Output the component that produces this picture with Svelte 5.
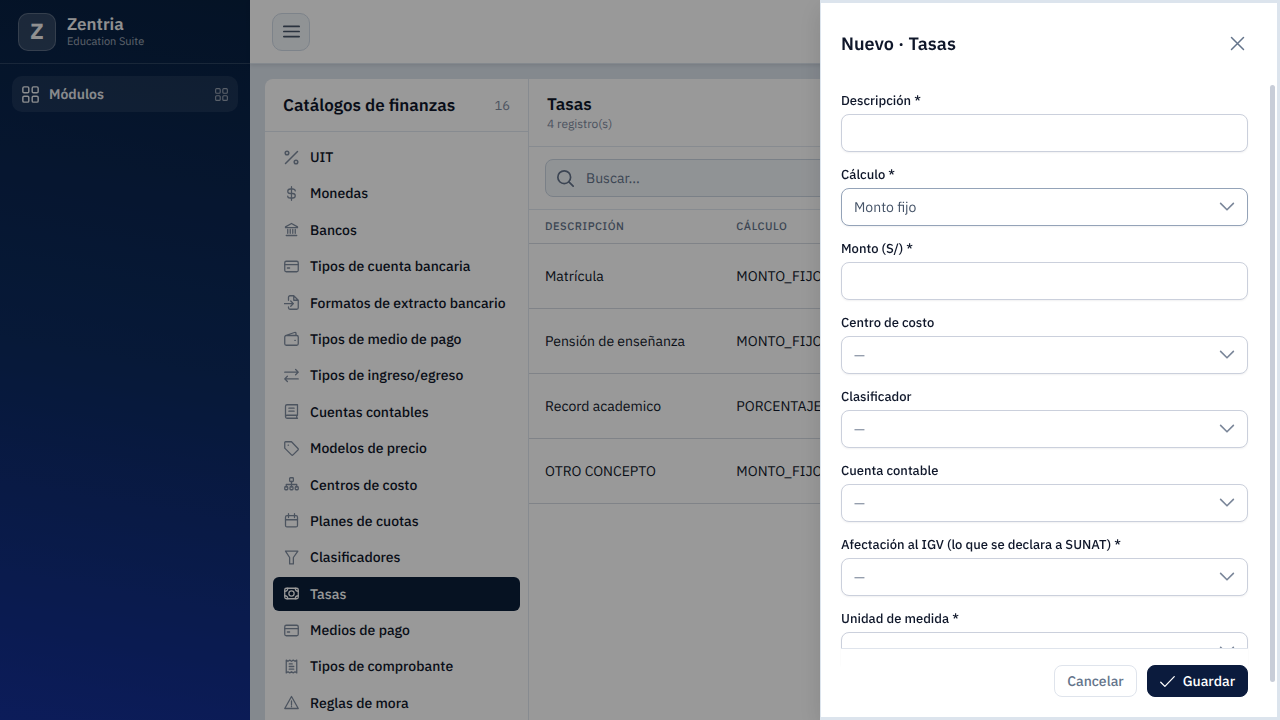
<script>
    const catalogs = [
        { name: 'UIT', icon: 'percent' },
        { name: 'Monedas', icon: 'dollar' },
        { name: 'Bancos', icon: 'bank' },
        { name: 'Tipos de cuenta bancaria', icon: 'card' },
        { name: 'Formatos de extracto bancario', icon: 'import' },
        { name: 'Tipos de medio de pago', icon: 'wallet' },
        { name: 'Tipos de ingreso/egreso', icon: 'swap' },
        { name: 'Cuentas contables', icon: 'book' },
        { name: 'Modelos de precio', icon: 'tag' },
        { name: 'Centros de costo', icon: 'sitemap' },
        { name: 'Planes de cuotas', icon: 'calendar' },
        { name: 'Clasificadores', icon: 'filter' },
        { name: 'Tasas', icon: 'money' },
        { name: 'Medios de pago', icon: 'card' },
        { name: 'Tipos de comprobante', icon: 'receipt' },
        { name: 'Reglas de mora', icon: 'warning' }
    ];

    const rows = [
        { description: 'Matrícula', calc: 'MONTO_FIJO' },
        { description: 'Pensión de enseñanza', calc: 'MONTO_FIJO' },
        { description: 'Record academico', calc: 'PORCENTAJE_' },
        { description: 'OTRO CONCEPTO', calc: 'MONTO_FIJO' }
    ];

    const fields = [
        { id: 'descripcion', label: 'Descripción *', type: 'text' },
        { id: 'calculo', label: 'Cálculo *', type: 'select', value: 'Monto fijo' },
        { id: 'monto', label: 'Monto (S/) *', type: 'text' },
        { id: 'centro', label: 'Centro de costo', type: 'select' },
        { id: 'clasificador', label: 'Clasificador', type: 'select' },
        { id: 'cuenta', label: 'Cuenta contable', type: 'select' },
        { id: 'igv', label: 'Afectación al IGV (lo que se declara a SUNAT) *', type: 'select' },
        { id: 'unidad', label: 'Unidad de medida *', type: 'select' }
    ];

    let selected = $state('Tasas');

    let scroller;
    let thumbTop = $state(0);
    let thumbSize = $state(100);

    const updateThumb = () => {
        thumbTop = scroller.scrollTop;
        thumbSize = (scroller.clientHeight / scroller.scrollHeight) * 100;
    };

    $effect(() => {
        updateThumb();
    });
</script>

<svelte:window onresize={updateThumb} />

{#snippet icon(name, size = 15)}
    <svg class="icon {name}" width={size} height={size} viewBox="0 0 20 20" aria-hidden="true">
        {#if name === 'percent'}
            <path d="M18 2 2 18" /><circle cx="4" cy="4" r="2.4" /><circle cx="16" cy="16" r="2.4" />
        {:else if name === 'dollar'}
            <path d="M10 1v18M15 6.5C15 4.8 13.4 4 11.5 4h-3C6.600 4 5 5 5 7s1.600 3 3.500 3h3c2 0 3.500 1 3.500 3s-1.500 3-3.500 3h-3C6.500 16 5 15 5 13.500" />
        {:else if name === 'bank'}
            <path d="M2 7.500V6.500L10 2l8 4.500v1M3.500 7.500h13M5 10v5M8.300 10v5M11.700 10v5M15 10v5M3 18h14" />
        {:else if name === 'card'}
            <rect x="1" y="3" width="18" height="14" rx="2" /><path d="M1 7.500h18M4.500 12h3" />
        {:else if name === 'import'}
            <path d="M6 7V3a2 2 0 0 1 2-2h5l6 6v10a2 2 0 0 1-2 2H8a2 2 0 0 1-2-2v-1M13 1v6h6M.5 11.500H12M9 8l3.500 3.500L9 15" />
        {:else if name === 'wallet'}
            <path d="M17 6H3a2 2 0 0 0-2 2v9a2 2 0 0 0 2 2h14a2 2 0 0 0 2-2V8a2 2 0 0 0-2-2ZM2 6l12-4q2-.5 2 1.500V6M14.500 12.500h.5" />
        {:else if name === 'swap'}
            <path d="M1 5.500h18M15.500 2 19 5.500 15.500 9M19 14.500H1M4.500 11 1 14.500 4.500 18" />
        {:else if name === 'book'}
            <path d="M18 1H4a2 2 0 0 0-2 2v14a2 2 0 0 0 2 2h14M18 1v14H4a2 2 0 0 0 0 4M17 15v4M6.500 5.500h7M6.500 9.500h7" />
        {:else if name === 'tag'}
            <path d="M1 2v7.500L10 18.500a1.500 1.500 0 0 0 2 0L18.600 12a1.500 1.500 0 0 0 0-2L10 1H2a1 1 0 0 0-1 1ZM5.500 5.500h.5" />
        {:else if name === 'sitemap'}
            <rect x="7.500" y="1" width="5" height="5" rx="1" /><rect x="1" y="13" width="4" height="4" rx="1" /><rect x="8" y="13" width="4" height="4" rx="1" /><rect x="15" y="13" width="4" height="4" rx="1" /><path d="M10 6v7M3 13v-3h14v3" />
        {:else if name === 'calendar'}
            <rect x="2" y="3.500" width="16" height="15" rx="2" /><path d="M2 9h16M6 1v5M14 1v5" />
        {:else if name === 'filter'}
            <path d="M2 1.500h16.500l-6 8.500v8.500h-5V10Z" />
        {:else if name === 'money'}
            <rect x="1" y="3" width="18" height="14" rx="2" /><circle cx="10" cy="10" r="3.500" /><path d="M1 7q4 0 4-4M19 7q-4 0-4-4M1 13q4 0 4 4M19 13q-4 0-4 4" />
        {:else if name === 'receipt'}
            <path d="M3 1.500 5.300 3l2.400-1.500L10 3l2.300-1.500L14.700 3 17 1.500v17L14.700 17l-2.400 1.500L10 17l-2.300 1.500L5.300 17 3 18.500ZM7 6.500h4M7 10h6M7 13.500h6" />
        {:else if name === 'warning'}
            <path d="M10 2 1 18h18ZM10 8v5M10 15v.5" />
        {:else if name === 'grid'}
            <rect x="1" y="1" width="7" height="7" rx="1.500" /><rect x="12" y="1" width="7" height="7" rx="1.500" /><rect x="1" y="12" width="7" height="7" rx="1.500" /><rect x="12" y="12" width="7" height="7" rx="1.500" />
        {:else if name === 'bars'}
            <path d="M1 4h18M1 10h18M1 16h18" />
        {:else if name === 'search'}
            <circle cx="8.500" cy="8.500" r="7.500" /><path d="m14 14 5 5" />
        {:else if name === 'close'}
            <path d="m2 2 16 16M18 2 2 18" />
        {:else if name === 'down'}
            <path d="m2 5.500 8 8 8-8" />
        {:else if name === 'check'}
            <path d="m1 11 5.500 5.500L19 3.500" />
        {/if}
    </svg>
{/snippet}

<div class="app">
    <aside class="sidebar">
        <div class="brand">
            <span class="logo">Z</span>
            <div>
                <div class="brand-name">Zentria</div>
                <div class="brand-sub">Education Suite</div>
            </div>
        </div>
        <nav>
            <a class="module" href="#modulos">
                {@render icon('grid', 17)}
                <span>Módulos</span>
                {@render icon('grid', 13)}
            </a>
        </nav>
    </aside>

    <div class="page">
        <header class="topbar">
            <button class="burger" aria-label="Menú">{@render icon('bars', 17)}</button>
        </header>

        <main>
            <section class="catalogs">
                <div class="catalogs-head">
                    <h2>Catálogos de finanzas</h2>
                    <span>16</span>
                </div>
                <div class="catalog-list">
                    {#each catalogs as item}
                        <button class:active={item.name === selected} onclick={() => (selected = item.name)}>
                            {@render icon(item.icon)}
                            {item.name}
                        </button>
                    {/each}
                </div>
            </section>

            <section class="records">
                <div class="records-head">
                    <h2>Tasas</h2>
                    <p>4 registro(s)</p>
                </div>
                <div class="toolbar">
                    <label class="search-box">
                        {@render icon('search', 17)}
                        <input type="search" placeholder="Buscar..." aria-label="Buscar" />
                    </label>
                </div>
                <table>
                    <thead>
                        <tr><th class="col-description">Descripción</th><th>Cálculo</th></tr>
                    </thead>
                    <tbody>
                        {#each rows as row}
                            <tr><td>{row.description}</td><td>{row.calc}</td></tr>
                        {/each}
                    </tbody>
                </table>
            </section>
        </main>
    </div>
</div>

<div class="mask">
    <div class="drawer" role="dialog" aria-modal="true" aria-labelledby="drawer-title">
        <div class="drawer-head">
            <h1 id="drawer-title">Nuevo · Tasas</h1>
            <button class="close-button" aria-label="Cerrar">{@render icon('close', 15)}</button>
        </div>
        <div class="drawer-body">
            <form bind:this={scroller} onscroll={updateThumb}>
                <div class="fields">
                    {#each fields as field}
                        <div class="field">
                            <label for={field.id}>{field.label}</label>
                            {#if field.type === 'text'}
                                <input id={field.id} type="text" />
                            {:else}
                                <div class="select" class:filled={field.value}>
                                    <select id={field.id}>
                                        <option>{field.value ?? '—'}</option>
                                    </select>
                                    {@render icon('down', 16)}
                                </div>
                            {/if}
                        </div>
                    {/each}
                </div>
                <div class="actions">
                    <button type="button" class="cancel">Cancelar</button>
                    <button type="button" class="save">{@render icon('check', 15)} Guardar</button>
                </div>
            </form>
            <div class="track">
                <div class="thumb" style:margin-top="{thumbTop}px" style:height="{thumbSize}%"></div>
            </div>
        </div>
    </div>
</div>

<style>
    :global(body) {
        margin: 0;
        background: #dce4ed;
        color: #0f172a;
        font-family: 'IBM Plex Sans', Roboto, 'Liberation Sans', sans-serif;
        font-size: 14px;
        text-rendering: geometricPrecision;
    }

    :global(*) {
        box-sizing: border-box;
    }

    button, input, select {
        font: inherit;
        color: inherit;
        text-rendering: inherit;
    }

    button {
        cursor: pointer;
    }

    h1, h2, p {
        margin: 0;
    }

    .icon {
        flex: none;
        fill: none;
        stroke: currentColor;
        stroke-width: 1.7;
        stroke-linecap: round;
        stroke-linejoin: round;
    }

    .percent, .bars, .close, .down, .search {
        stroke-width: 2;
    }

    .app {
        display: flex;
        height: 100vh;
        overflow: hidden;
    }

    .sidebar {
        width: 250px;
        flex: none;
        color: #f1f1f1;
        background: linear-gradient(190deg, #08203f 0%, #0c2a5e 50%, #142f96 100%);
    }

    .brand {
        display: flex;
        align-items: center;
        gap: 11px;
        height: 64px;
        padding: 0 18px;
        border-bottom: 1px solid rgba(255, 255, 255, 0.14);
    }

    .logo {
        display: grid;
        place-items: center;
        width: 38px;
        height: 38px;
        border: 1px solid rgba(255, 255, 255, 0.2);
        border-radius: 10px;
        background: rgba(255, 255, 255, 0.16);
        font-size: 22px;
        font-weight: 700;
    }

    .brand-name {
        font-size: 17px;
        font-weight: 600;
        line-height: 20px;
    }

    .brand-sub {
        color: rgba(255, 255, 255, 0.6);
        font-size: 11px;
        line-height: 16px;
    }

    nav {
        padding: 12px;
    }

    .module {
        display: flex;
        align-items: center;
        gap: 10px;
        height: 36px;
        padding: 0 10px;
        border-radius: 10px;
        background: rgba(255, 255, 255, 0.08);
        color: rgba(255, 255, 255, 0.9);
        font-weight: 600;
        text-decoration: none;
    }

    .module span {
        flex: 1;
    }

    .module .icon:last-child {
        opacity: 0.6;
    }

    .page {
        display: flex;
        flex: 1;
        flex-direction: column;
        min-width: 0;
    }

    .topbar {
        display: flex;
        align-items: center;
        flex: none;
        height: 64px;
        padding: 0 22px;
        background: #fff;
        border-bottom: 1px solid #dce4ed;
        box-shadow: 0 1px 4px rgba(15, 23, 42, 0.12);
    }

    .burger {
        display: grid;
        place-items: center;
        width: 38px;
        height: 38px;
        padding: 0;
        border: 1px solid #d0dae6;
        border-radius: 10px;
        background: #f1f5f9;
        color: #475569;
    }

    main {
        display: flex;
        flex: 1;
        min-height: 0;
        margin: 15px 15px 0;
        overflow: hidden;
        border-radius: 8px 8px 0 0;
        background: #fff;
    }

    .catalogs {
        display: flex;
        flex: none;
        flex-direction: column;
        width: 264px;
        border-right: 1px solid #e2e8f0;
    }

    .catalogs-head {
        display: flex;
        align-items: center;
        justify-content: space-between;
        flex: none;
        height: 53px;
        padding: 0 18px;
        border-bottom: 1px solid #e2e8f0;
    }

    h2 {
        font-size: 17px;
        font-weight: 600;
        line-height: 22px;
    }

    .catalogs-head span {
        color: #7f8c9f;
        font-size: 13px;
    }

    .catalog-list {
        display: flex;
        flex: 1;
        flex-direction: column;
        justify-content: space-between;
        min-height: 0;
        padding: 8px 8px 0;
        overflow-y: auto;
    }

    .catalog-list button {
        display: flex;
        align-items: center;
        flex: none;
        gap: 11px;
        height: 34px;
        padding: 0 11px;
        border: 0;
        border-radius: 6px;
        background: none;
        font-weight: 500;
        text-align: left;
    }

    .catalog-list .icon {
        color: #7f8c9f;
    }

    .catalog-list .active {
        background: #0b1f3a;
        color: #fff;
    }

    .catalog-list .active .icon {
        color: #fff;
    }

    .records {
        flex: 1;
        min-width: 0;
    }

    .records-head {
        padding: 14px 18px 12px;
        border-bottom: 1px solid #e2e8f0;
    }

    .records-head p {
        color: #7f8c9f;
        font-size: 12px;
        line-height: 19px;
    }

    .toolbar {
        padding: 12px 16px;
        border-bottom: 1px solid #e2e8f0;
    }

    .search-box {
        display: flex;
        align-items: center;
        gap: 12px;
        height: 38px;
        padding: 0 11px;
        border: 1px solid #cbd5e1;
        border-radius: 8px;
        background: #f1f5f9;
        color: #64748b;
    }

    .search-box input {
        flex: 1;
        padding: 0;
        border: 0;
        outline: 0;
        background: none;
    }

    .search-box input::placeholder {
        color: #64748b;
    }

    table {
        width: 100%;
        border-collapse: collapse;
        table-layout: fixed;
    }

    th, td {
        padding: 0 16px;
        border-bottom: 1px solid #d5dbe3;
        text-align: left;
    }

    th {
        height: 33px;
        padding-top: 2px;
        color: #64748b;
        font-size: 11px;
        font-weight: 500;
        letter-spacing: 0.05em;
        text-transform: uppercase;
    }

    td {
        height: 65px;
    }

    .col-description {
        width: 26%;
    }

    .mask {
        position: fixed;
        inset: 0;
        display: flex;
        justify-content: flex-end;
        background: rgba(0, 0, 0, 0.4);
    }

    .drawer {
        display: flex;
        flex-direction: column;
        width: 460px;
        max-width: 100%;
        border: 3px solid #dce4ed;
        border-left-width: 1px;
        background: #fff;
        box-shadow: 0 8px 24px rgba(0, 0, 0, 0.12);
    }

    .drawer-head {
        display: flex;
        align-items: center;
        justify-content: space-between;
        flex: none;
        height: 81px;
        padding: 0 20px;
    }

    h1 {
        font-size: 18px;
        font-weight: 600;
    }

    .close-button {
        display: grid;
        place-items: center;
        width: 40px;
        height: 40px;
        padding: 0;
        border: 0;
        background: none;
        color: #64748b;
    }

    .drawer-body {
        display: flex;
        flex: 1;
        min-height: 0;
    }

    form {
        flex: 1;
        padding: 0 20px;
        overflow-y: auto;
        scrollbar-width: none;
    }

    .track {
        width: 9px;
        padding: 1px 2px;
    }

    .thumb {
        border-radius: 3px;
        background: #c8cdd8;
    }

    .fields {
        display: flex;
        flex-direction: column;
        gap: 14px;
        padding: 8px 0 14px;
    }

    .field {
        display: flex;
        flex-direction: column;
        gap: 4px;
    }

    .field label {
        font-size: 13px;
        font-weight: 500;
        line-height: 18px;
    }

    .field input, .field select {
        width: 100%;
        height: 38px;
        padding: 0 12px;
        border: 1px solid #cbd0dc;
        border-radius: 8px;
        background: #fff;
        box-shadow: 0 1px 2px rgba(15, 23, 42, 0.06);
    }

    .select {
        display: grid;
        align-items: center;
        color: #7a8699;
    }

    .select select, .select .icon {
        grid-area: 1 / 1;
    }

    .select select {
        appearance: none;
    }

    .select .icon {
        justify-self: end;
        margin-right: 13px;
        pointer-events: none;
    }

    .select.filled select {
        border-color: #94a3b8;
        color: #475569;
    }

    .actions {
        position: sticky;
        bottom: 0;
        display: flex;
        justify-content: flex-end;
        gap: 10px;
        padding: 16px 0 20px;
        border-top: 1px solid #dfe4ec;
        background: #fff;
    }

    .actions button {
        display: flex;
        align-items: center;
        gap: 8px;
        height: 32px;
        padding: 0 12px;
        border: 1px solid #dfe4ec;
        border-radius: 8px;
        background: #fff;
        color: #64748b;
        font-weight: 500;
    }

    .actions .save {
        border-color: #0b1b3d;
        background: #0b1b3d;
        color: #fff;
    }
</style>
